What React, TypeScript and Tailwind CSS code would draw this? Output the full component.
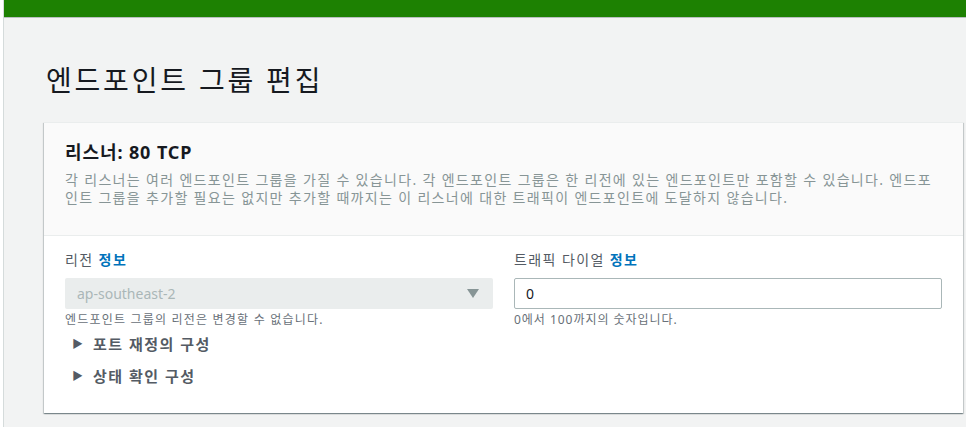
import React from 'react';

const font = { fontFamily: '"Noto Sans", "Noto Sans CJK KR", sans-serif' };

function Expandable({ label }: { label: string }) {
  return (
    <div className="flex items-center h-[22px]">
      <span className="w-[28px] pl-[7px] text-[11px] text-[#545b64]">▶</span>
      <span className="text-[15px] font-bold text-[#545b64] leading-[22px] tracking-[0.1em]">{label}</span>
    </div>
  );
}

export default function App() {
  return (
    <div className="min-h-[427px] bg-white pl-[3px]" style={font}>
      <div className="min-h-[427px] bg-[#f2f3f3] border-l border-[#d5dbdb]">
        <div className="h-[18px] bg-[#1d8102] border-b border-[#b9c0c0]" />

        <div className="pl-[40px] pr-[3px]">
          <h1 className="pt-[43px] pl-[2px] text-[28px] leading-[38px] text-[#16191f] font-normal tracking-[0.1em]">
            엔드포인트 그룹 편집
          </h1>

          <div className="mt-[23px] bg-white border-t border-[#eaeded] shadow-[0_1px_1px_0_rgba(0,28,36,0.3),1px_1px_1px_0_rgba(0,28,36,0.15),-1px_1px_1px_0_rgba(0,28,36,0.15)]">
            <div className="bg-[#fafafa] border-b border-[#eaeded] px-[21px] pt-[18px] pb-[28px]">
              <h2 className="text-[18px] leading-[22px] font-bold text-[#16191f] tracking-[0.05em]">리스너: 80 TCP</h2>
              <p className="mt-[8px] text-[14px] leading-[18px] text-[#879596] tracking-[0.095em]">
                각 리스너는 여러 엔드포인트 그룹을 가질 수 있습니다. 각 엔드포인트 그룹은 한 리전에 있는 엔드포인트만 포함할 수 있습니다. 엔드포인트 그룹을 추가할 필요는 없지만 추가할 때까지는 이 리스너에 대한 트래픽이 엔드포인트에 도달하지 않습니다.
              </p>
            </div>

            <div className="px-[21px] pt-[14px] pb-[26px]">
              <div className="grid grid-cols-2 gap-x-[21px]">
                <div>
                  <div className="text-[14px] leading-[20px] text-[#545b64] tracking-[0.1em]">
                    리전 <span className="font-bold text-[#0073bb]">정보</span>
                  </div>
                  <div className="mt-[8px] h-[31px] bg-[#eaeded] rounded-[2px] flex items-center justify-between pl-[12px] pr-[14px]">
                    <span className="text-[14px] text-[#aab7b8]">ap-southeast-2</span>
                    <svg width="12" height="9" viewBox="0 0 12 9">
                      <path d="M0 0 L12 0 L6 9 Z" fill="#879596" />
                    </svg>
                  </div>
                  <div className="mt-[3px] text-[12px] leading-[16px] text-[#687078] tracking-[0.1em]">
                    엔드포인트 그룹의 리전은 변경할 수 없습니다.
                  </div>
                </div>
                <div>
                  <div className="text-[14px] leading-[20px] text-[#545b64] tracking-[0.1em]">
                    트래픽 다이얼 <span className="font-bold text-[#0073bb]">정보</span>
                  </div>
                  <div className="mt-[8px] h-[31px] border border-[#aab7b8] rounded-[2px] flex items-center px-[11px]">
                    <span className="text-[14px] text-[#16191f]">0</span>
                  </div>
                  <div className="mt-[3px] text-[12px] leading-[16px] text-[#687078] tracking-[0.08em]">
                    0에서 100까지의 숫자입니다.
                  </div>
                </div>
              </div>

              <div className="mt-[5px] flex flex-col gap-[10px]">
                <Expandable label="포트 재정의 구성" />
                <Expandable label="상태 확인 구성" />
              </div>
            </div>
          </div>
        </div>
      </div>
    </div>
  );
}
